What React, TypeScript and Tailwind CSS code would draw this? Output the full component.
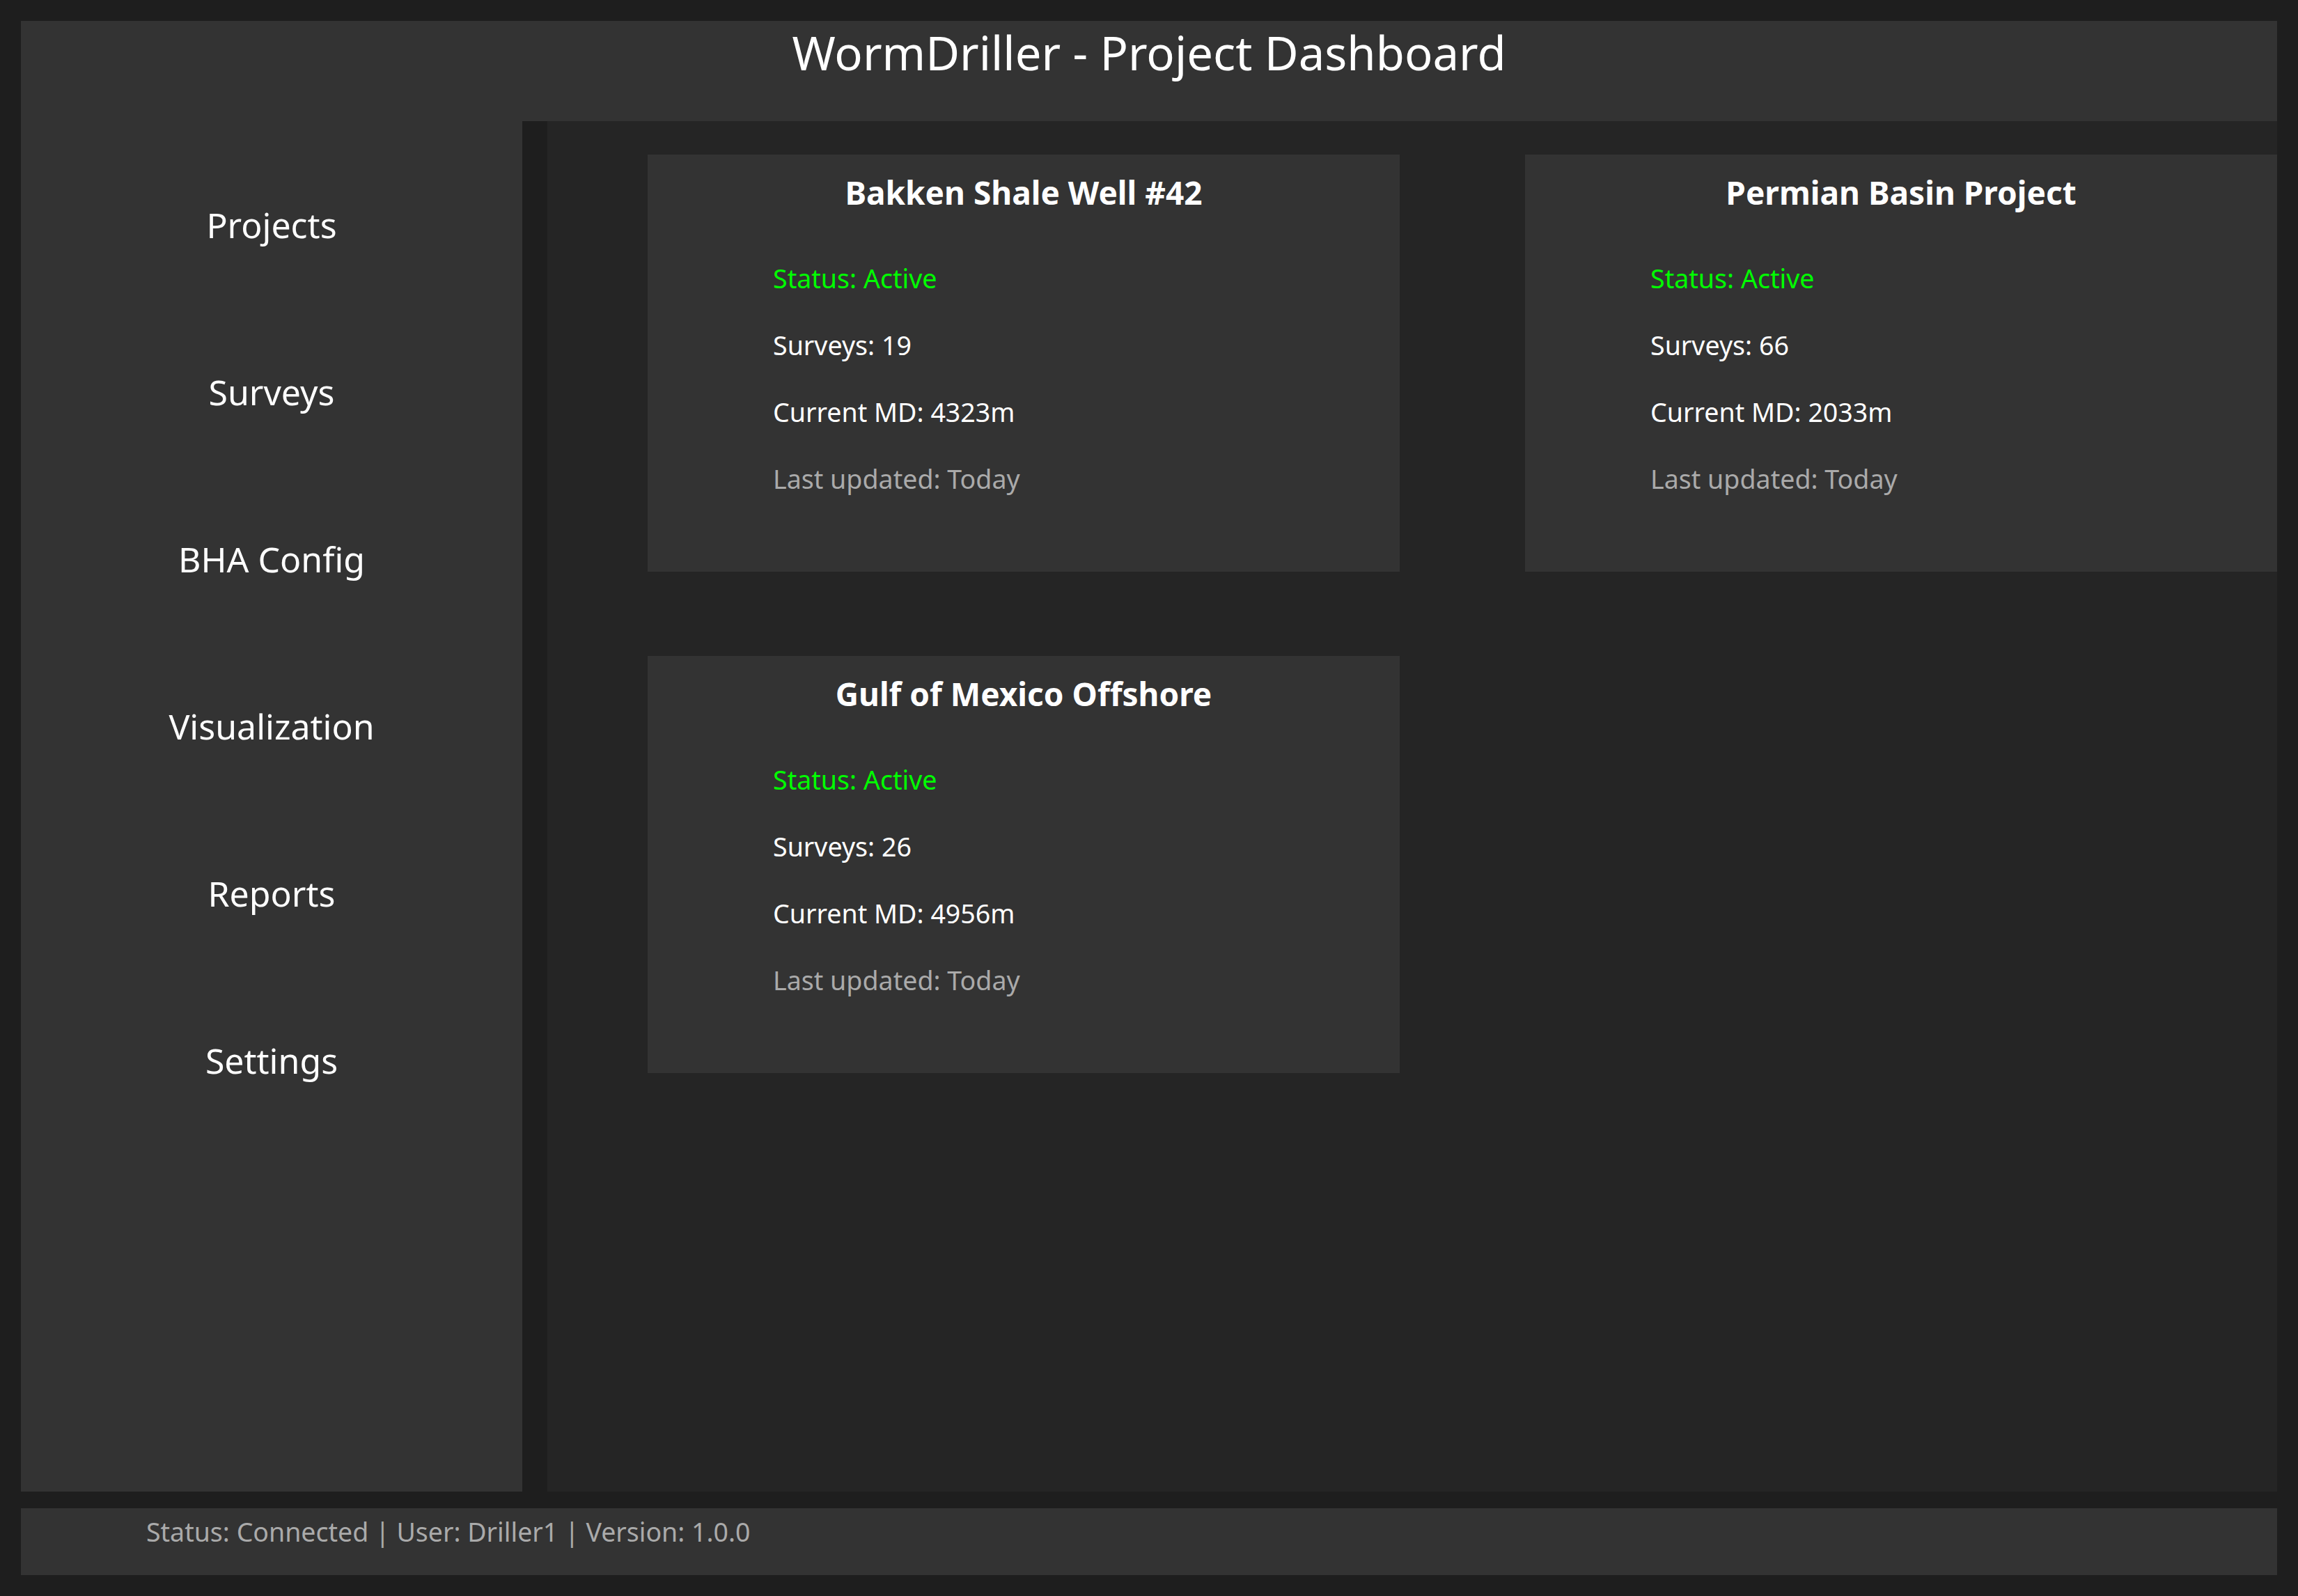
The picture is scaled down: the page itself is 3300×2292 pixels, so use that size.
import React from "react";

const projects = [
  { name: "Bakken Shale Well #42", surveys: 19, md: 4323 },
  { name: "Permian Basin Project", surveys: 66, md: 2033 },
  { name: "Gulf of Mexico Offshore", surveys: 26, md: 4956 },
];

const nav = ["Projects", "Surveys", "BHA Config", "Visualization", "Reports", "Settings"];

function Card({ name, surveys, md }: { name: string; surveys: number; md: number }) {
  return (
    <div className="h-[599px] w-[1080px] bg-[#333333] pt-[23px]">
      <div className="h-[63px] text-center text-[46px] font-bold leading-[63px] text-white">{name}</div>
      <div className="mt-[44px] flex flex-col pl-[180px] text-[37.6px]">
        <div className="h-[96px] leading-[96px] text-[#00ff00]">Status: Active</div>
        <div className="h-[96px] leading-[96px] text-white">Surveys: {surveys}</div>
        <div className="h-[96px] leading-[96px] text-white">Current MD: {md}m</div>
        <div className="h-[96px] leading-[96px] text-[#aaaaaa]">Last updated: Today</div>
      </div>
    </div>
  );
}

export default function App() {
  return (
    <div
      className="flex h-[2292px] w-[3300px] flex-col bg-[#1e1e1e] p-[30px]"
      style={{ fontFamily: '"Noto Sans", "Open Sans", sans-serif' }}
    >
      <header className="h-[144px] shrink-0 bg-[#333333] text-center text-[67px] leading-[91px] text-white">
        WormDriller - Project Dashboard
      </header>
      <div className="flex min-h-0 flex-1 gap-[36px]">
        <nav className="flex w-[720px] shrink-0 flex-col bg-[#333333] pt-[29px]">
          {nav.map((n) => (
            <div key={n} className="h-[240px] text-center text-[50px] leading-[240px] text-white">
              {n}
            </div>
          ))}
        </nav>
        <main className="flex-1 bg-[#252525] pl-[144px] pt-[48px]">
          <div className="grid grid-cols-[1080px_1080px] gap-x-[180px] gap-y-[121px]">
            {projects.map((p) => (
              <Card key={p.name} {...p} />
            ))}
          </div>
        </main>
      </div>
      <footer className="mt-[24px] h-[96px] shrink-0 bg-[#333333] pl-[180px] pt-[8px] text-[37.5px] leading-[52px] text-[#aaaaaa]">
        Status: Connected | User: Driller1 | Version: 1.0.0
      </footer>
    </div>
  );
}
